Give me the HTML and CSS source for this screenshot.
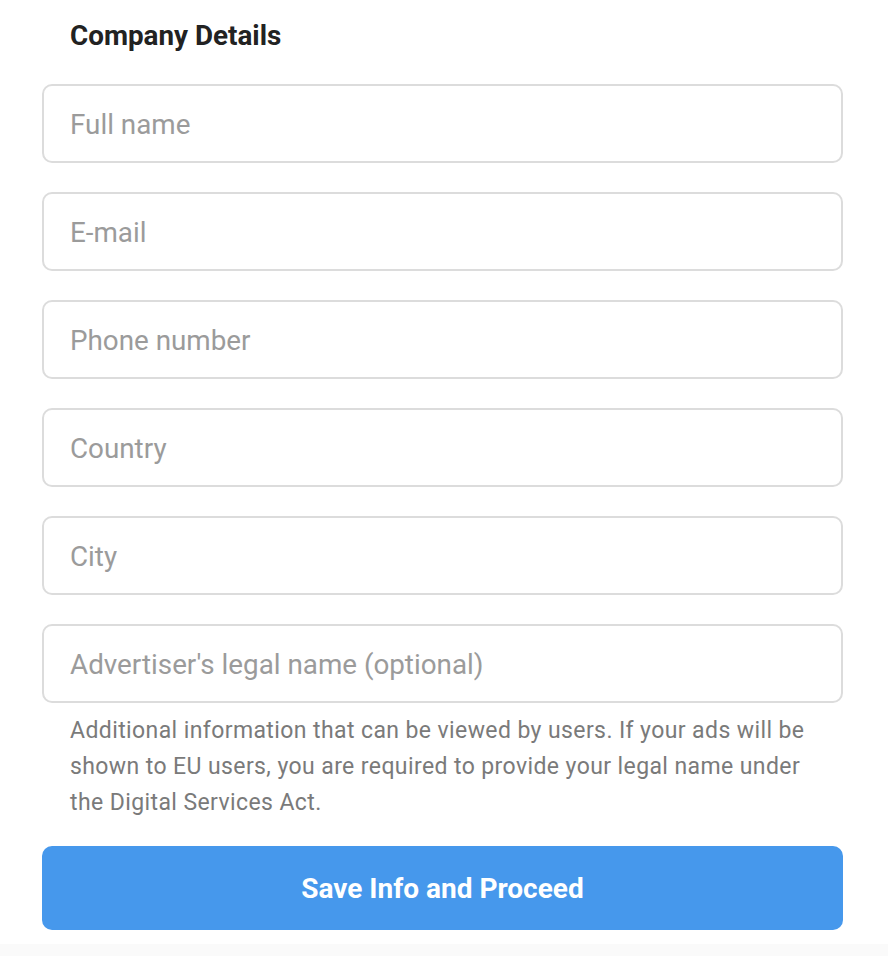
FILE: index.html
```html
<!DOCTYPE html>
<html lang="en">
<head>
    <meta charset="UTF-8">
    <meta name="viewport" content="width=device-width, initial-scale=1.0">
    <title>Company Details</title>
    <link rel="stylesheet" href="styles.css">
</head>
<body>

    <div class="form-panel">
        <h2 class="form-title">Company Details</h2>

        <form class="company-form" onsubmit="return false;">
            <input class="field" type="text" placeholder="Full name">
            <input class="field" type="email" placeholder="E-mail">
            <input class="field" type="tel" placeholder="Phone number">
            <input class="field" type="text" placeholder="Country">
            <input class="field" type="text" placeholder="City">
            <div class="field-group">
                <input class="field" type="text" placeholder="Advertiser's legal name (optional)">
                <p class="hint">Additional information that can be viewed by users. If your ads will be shown to EU users, you are required to provide your legal name under the Digital Services Act.</p>
            </div>
            <button class="submit-button" type="submit">Save Info and Proceed</button>
        </form>
    </div>

</body>
</html>
```

FILE: styles.css
```css
body {
    font-family: Roboto, 'Liberation Sans', Arial, sans-serif;
    background-color: #fafafa;
    margin: 0;
}
.form-panel {
    background-color: #fff;
    padding: 16px 45px 14px 42px;
}
.form-title {
    margin: 0 0 28px;
    padding-left: 28px;
    font-size: 27.8px;
    line-height: 40px;
    font-weight: 700;
    color: #222;
}
.company-form {
    display: flex;
    flex-direction: column;
    gap: 29px;
}
.field {
    box-sizing: border-box;
    width: 100%;
    height: 79px;
    margin: 0;
    padding: 2px 26px 0;
    border: 2px solid #dcdcdc;
    border-radius: 10px;
    background-color: #fff;
    font-family: inherit;
    font-size: 27.8px;
    color: #333;
    outline: none;
}
.field::placeholder {
    color: #9b9b9b;
}
.field-group {
    display: flex;
    flex-direction: column;
    margin-bottom: -4px;
}
.hint {
    margin: 10px 0 0;
    padding: 0 28px;
    font-size: 23px;
    letter-spacing: 0.4px;
    line-height: 36px;
    color: #7a7a7a;
}
.submit-button {
    height: 84px;
    border: none;
    border-radius: 10px;
    background-color: #4698ec;
    color: #fff;
    font-family: inherit;
    font-size: 28px;
    font-weight: 700;
    cursor: pointer;
}
```
